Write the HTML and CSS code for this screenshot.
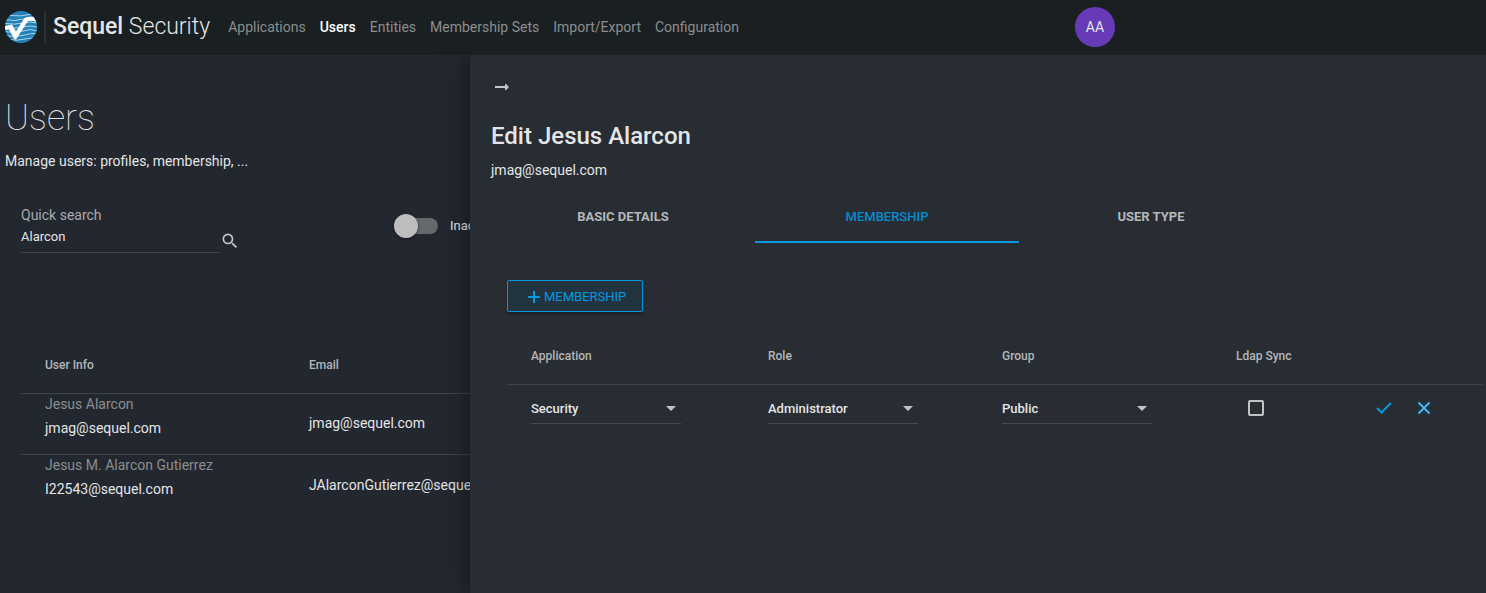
FILE: index.html
```html
<!DOCTYPE html>
<html lang="en">
<head>
  <meta charset="UTF-8">
  <meta name="viewport" content="width=device-width, initial-scale=1.0">
  <title>Sequel Security</title>
  <link rel="stylesheet" href="styles.css">
</head>
<body>
  <header class="topbar">
    <div class="topbar-inner">
      <a class="brand" href="#">
        <svg class="logo" viewBox="0 0 32 32" aria-hidden="true">
          <defs><clipPath id="globe"><circle cx="16" cy="16" r="16"/></clipPath></defs>
          <g clip-path="url(#globe)">
            <rect width="32" height="32" fill="#2381b9"/>
            <g fill="none" stroke="#c2dcec" stroke-width=".9">
              <path d="M5 4.500Q16 6 27 3"/>
              <path d="M0 8.500Q10 11 18 8T32 7"/>
              <path d="M0 12.500Q10 14 18 12T32 12"/>
              <path d="M0 16.500Q10 18 18 16T32 16"/>
              <path d="M0 20.500Q10 23 18 20T32 20"/>
              <path d="M0 24.500Q10 27 20 24T32 24"/>
              <path d="M4 28.500Q12 30 20 28T30 28"/>
            </g>
            <path d="M0 15l7-1.500 4 7L19.500 7q5-2 12.500-.5v4.500q-6-2-9-1L11 28.500H9.500L4 18.500l-4 .5z" fill="#fff"/>
          </g>
        </svg>
        <span class="brand-name"><b>Sequel</b> Security</span>
      </a>
      <nav class="nav">
        <a href="#">Applications</a>
        <a href="#" class="active">Users</a>
        <a href="#">Entities</a>
        <a href="#">Membership Sets</a>
        <a href="#">Import/Export</a>
        <a href="#">Configuration</a>
      </nav>
      <button class="avatar" type="button">AA</button>
    </div>
  </header>

  <div class="layout">
    <main class="page">
      <h1>Users</h1>
      <p class="intro">Manage users: profiles, membership, ...</p>

      <div class="filters">
        <form class="search">
          <div class="field">
            <label for="quick-search">Quick search</label>
            <input id="quick-search" type="text" value="Alarcon">
          </div>
          <button class="icon-btn" type="button" aria-label="Search">
            <svg width="20" height="20" viewBox="0 0 24 24" fill="currentColor"><path d="M15.500 14h-.79l-.28-.27A6.470 6.470 0 0 0 16 9.500 6.500 6.500 0 1 0 9.500 16c1.610 0 3.090-.59 4.230-1.570l.27.28v.79l5 4.990L20.490 19l-4.990-5zm-6 0C7.010 14 5 11.990 5 9.500S7.010 5 9.500 5 14 7.010 14 9.500 11.990 14 9.500 14z"/></svg>
          </button>
        </form>
        <div class="toggle">
          <input id="inactive" type="checkbox" role="switch">
          <label for="inactive">Inactive</label>
        </div>
      </div>

      <table class="users">
        <thead>
          <tr><th class="col-info">User Info</th><th>Email</th></tr>
        </thead>
        <tbody>
          <tr>
            <td><div class="muted">Jesus Alarcon</div><div>jmag@sequel.com</div></td>
            <td class="middle">jmag@sequel.com</td>
          </tr>
          <tr>
            <td><div class="muted">Jesus M. Alarcon Gutierrez</div><div>I22543@sequel.com</div></td>
            <td class="middle">JAlarconGutierrez@sequel.com</td>
          </tr>
        </tbody>
      </table>
    </main>

    <aside class="drawer">
      <button class="icon-btn back" type="button" aria-label="Close">
        <svg width="20" height="18" viewBox="0 0 20 18" fill="currentColor"><path d="M4 8h10V6h1l3 3-3 3h-1v-2H4z"/></svg>
      </button>
      <h2>Edit Jesus Alarcon</h2>
      <p class="mail">jmag@sequel.com</p>

      <div class="tabs" role="tablist">
        <button type="button" role="tab">BASIC DETAILS</button>
        <button type="button" role="tab" class="active" aria-selected="true">MEMBERSHIP</button>
        <button type="button" role="tab">USER TYPE</button>
      </div>

      <section class="panel">
        <button class="add-btn" type="button">
          <svg width="14" height="14" viewBox="0 0 14 14" fill="none" stroke="currentColor" stroke-width="2"><path d="M7 1v12M1 7h12"/></svg>
          MEMBERSHIP
        </button>

        <table class="membership">
          <thead>
            <tr>
              <th class="col-app">Application</th>
              <th class="col-role">Role</th>
              <th class="col-role">Group</th>
              <th class="col-ldap">Ldap Sync</th>
              <th></th>
            </tr>
          </thead>
          <tbody>
            <tr>
              <td>
                <div class="select">
                  <select aria-label="Application"><option>Security</option></select>
                  <svg width="10" height="5" viewBox="0 0 10 5" fill="currentColor"><path d="M0 0h10L5 5z"/></svg>
                </div>
              </td>
              <td>
                <div class="select">
                  <select aria-label="Role"><option>Administrator</option></select>
                  <svg width="10" height="5" viewBox="0 0 10 5" fill="currentColor"><path d="M0 0h10L5 5z"/></svg>
                </div>
              </td>
              <td>
                <div class="select">
                  <select aria-label="Group"><option>Public</option></select>
                  <svg width="10" height="5" viewBox="0 0 10 5" fill="currentColor"><path d="M0 0h10L5 5z"/></svg>
                </div>
              </td>
              <td><input class="check" type="checkbox" aria-label="Ldap Sync"></td>
              <td>
                <div class="actions">
                  <button class="icon-btn save" type="button" aria-label="Save">
                    <svg width="16" height="16" viewBox="0 0 16 16" fill="none" stroke="currentColor" stroke-width="2"><path d="M1 8l4.500 4.500L15 3"/></svg>
                  </button>
                  <button class="icon-btn cancel" type="button" aria-label="Cancel">
                    <svg width="16" height="16" viewBox="0 0 16 16" fill="none" stroke="currentColor" stroke-width="2"><path d="M2.500 2.500l11 11M13.500 2.500l-11 11"/></svg>
                  </button>
                </div>
              </td>
            </tr>
          </tbody>
        </table>
      </section>
    </aside>
  </div>
</body>
</html>
```
FILE: styles.css
```css
/* Reset and base styling */
* { box-sizing: border-box; margin: 0; padding: 0; }
body {
  display: flex;
  flex-direction: column;
  min-height: 100vh;
  font-family: Roboto, "Liberation Sans", sans-serif;
  font-size: 14px;
  line-height: 20px;
  color: #e4e5e6;
  background: #23272f;
}
button, input, select { font: inherit; color: inherit; }
button { background: none; border: none; cursor: pointer; }
a { color: inherit; text-decoration: none; }
svg { display: block; }

/* Top bar */
.topbar {
  position: relative;
  z-index: 2;
  padding-bottom: 1px;
  background: #1a1f21;
}
.topbar-inner {
  display: flex;
  align-items: center;
  max-width: 1120px;
  height: 54px;
  padding: 0 5px;
}
.brand { display: flex; align-items: center; }
.logo { width: 32px; height: 32px; }
.brand-name {
  margin-left: 7px;
  padding-left: 7px;
  border-left: 2px solid #2c3136;
  font-size: 23px;
  font-weight: 300;
  line-height: 32px;
}
.brand-name b { font-weight: 500; }
.nav {
  display: flex;
  gap: 14px;
  margin-left: 18px;
  color: #8b8e90;
}
.nav .active { color: #fff; font-weight: 500; }
.avatar {
  width: 40px;
  height: 40px;
  margin-left: auto;
  border-radius: 50%;
  background: #673ab7;
}

.layout {
  flex: 1;
  display: grid;
  grid-template-columns: 470px 1fr;
}

/* Users page, continues underneath the drawer */
.page {
  overflow: hidden;
  padding: 41px 0 0 5px;
}
h1 {
  font-size: 36px;
  font-weight: 100;
  line-height: 44px;
}
.intro { margin-top: 11px; }
.filters {
  display: grid;
  grid-template-columns: 373px 1fr;
  margin: 34px 0 84px 16px;
}
.search { display: flex; align-items: flex-end; }
.field { display: flex; flex-direction: column; }
.field label { color: #a9abae; }
.field input {
  width: 199px;
  height: 28px;
  padding-bottom: 4px;
  border: none;
  border-bottom: 1px solid #3f4347;
  background: none;
  font-size: 13px;
}
.icon-btn { color: #c4c5c7; }
.search .icon-btn { padding-bottom: 2px; }
.toggle {
  display: flex;
  align-items: center;
  gap: 12px;
  align-self: start;
  margin-top: 11px;
  font-size: 13px;
}
.toggle input {
  appearance: none;
  display: flex;
  align-items: center;
  flex: none;
  width: 44px;
  height: 16px;
  border-radius: 8px;
  background: #65696c;
}
.toggle input::before {
  content: "";
  width: 24px;
  height: 24px;
  flex: none;
  border-radius: 50%;
  background: #bdbdbd;
  box-shadow: 0 1px 3px rgba(0,0,0,0.5);
}

/* Tables */
table {
  border-collapse: separate;
  border-spacing: 0;
  table-layout: fixed;
  text-align: left;
}
th {
  height: 57px;
  padding-left: 24px;
  border-bottom: 1px solid #3f4347;
  font-size: 12px;
  font-weight: 500;
  color: #b5b7b9;
}
td { padding-left: 24px; }
.users { width: 900px; margin-left: 16px; }
.users td {
  height: 61px;
  border-bottom: 1px solid #3f4347;
  vertical-align: top;
}
.users tr:last-child td { border-bottom: none; }
.users td.middle { padding-bottom: 2px; vertical-align: middle; }
.users .muted { margin-bottom: 4px; color: #8b8e90; }
.col-info { width: 264px; }

/* Edit drawer */
.drawer {
  position: relative;
  z-index: 1;
  padding: 23px 0 0 21px;
  background: #272d33;
  box-shadow: 0 0 24px rgba(0,0,0,0.5);
}
.back { display: block; }
h2 {
  margin-top: 24px;
  font-size: 24px;
  font-weight: 500;
  line-height: 32px;
}
.mail { margin-top: 8px; }
.tabs { display: flex; margin-top: 11px; }
.tabs button {
  width: 264px;
  height: 52px;
  padding-top: 2px;
  border-bottom: 2px solid transparent;
  font-size: 13px;
  font-weight: 700;
  color: #b5b7b9;
}
.tabs .active {
  border-color: #0398e2;
  font-weight: 500;
  color: #058bcf;
}
.panel { padding: 37px 3px 0 16px; }
.add-btn {
  display: flex;
  align-items: center;
  gap: 3px;
  height: 32px;
  margin-bottom: 16px;
  padding: 2px 16px 0 19px;
  border: 1px solid #0398e2;
  border-radius: 2px;
  background: #21343f;
  box-shadow: 0 2px 3px rgba(0,0,0,0.3);
  font-size: 13px;
  color: #0398e2;
}
.membership { width: 100%; }
.membership td { height: 46px; }
.col-app { width: 237px; }
.col-role { width: 234px; }
.col-ldap { width: 140px; }
.select {
  display: grid;
  align-items: center;
  width: 150px;
  color: #c4c5c7;
}
.select select, .select svg { grid-area: 1 / 1; }
.select select {
  appearance: none;
  height: 32px;
  padding-top: 2px;
  border: none;
  border-bottom: 1px solid #444a50;
  background: none;
  font-size: 13px;
  font-weight: 500;
  color: #e4e5e6;
}
.select svg {
  justify-self: end;
  margin-right: 5px;
  pointer-events: none;
}
.check {
  appearance: none;
  display: block;
  width: 16px;
  height: 16px;
  margin-left: 12px;
  border: 2px solid #c0c2c4;
  border-radius: 2px;
}
.actions { display: flex; gap: 24px; }
.save { color: #0398e2; }
.cancel { color: #40b4f5; }
```
